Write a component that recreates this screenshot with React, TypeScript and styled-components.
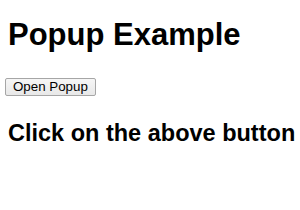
import React from 'react';
import styled, { createGlobalStyle } from 'styled-components';

const GlobalStyle = createGlobalStyle`
    body {
        margin: 0;
        padding: 0 8px;
        background: #ffffff;
        font-family: "Liberation Sans", Arial, sans-serif;
        color: #000000;
    }
`;

const Page = styled.div`
    display: flex;
    flex-direction: column;
    align-items: flex-start;
    padding-top: 17px;
`;

const Title = styled.h1`
    font-size: 31px;
    line-height: 36px;
    font-weight: bold;
    white-space: nowrap;
    margin: 0 0 25px;
`;

const OpenButton = styled.button`
    font-family: "Liberation Sans", Arial, sans-serif;
    font-size: 13.33px;
    line-height: 16px;
    height: 18px;
    margin-left: -3px;
    color: #000000;
    background: linear-gradient(#f6f6f6, #e8e8e8);
    border: 1px solid #a6a6a6;
    border-radius: 2px;
    padding: 0 7px;
    cursor: pointer;
`;

const Hint = styled.h2`
    font-size: 23.5px;
    line-height: 28px;
    font-weight: bold;
    white-space: nowrap;
    margin: 23px 0 0;
`;

const App: React.FC = () => (
    <>
        <GlobalStyle />
        <Page>
            <Title>Popup Example</Title>
            <OpenButton type="button">Open Popup</OpenButton>
            <Hint>Click on the above button</Hint>
        </Page>
    </>
);

export default App;
